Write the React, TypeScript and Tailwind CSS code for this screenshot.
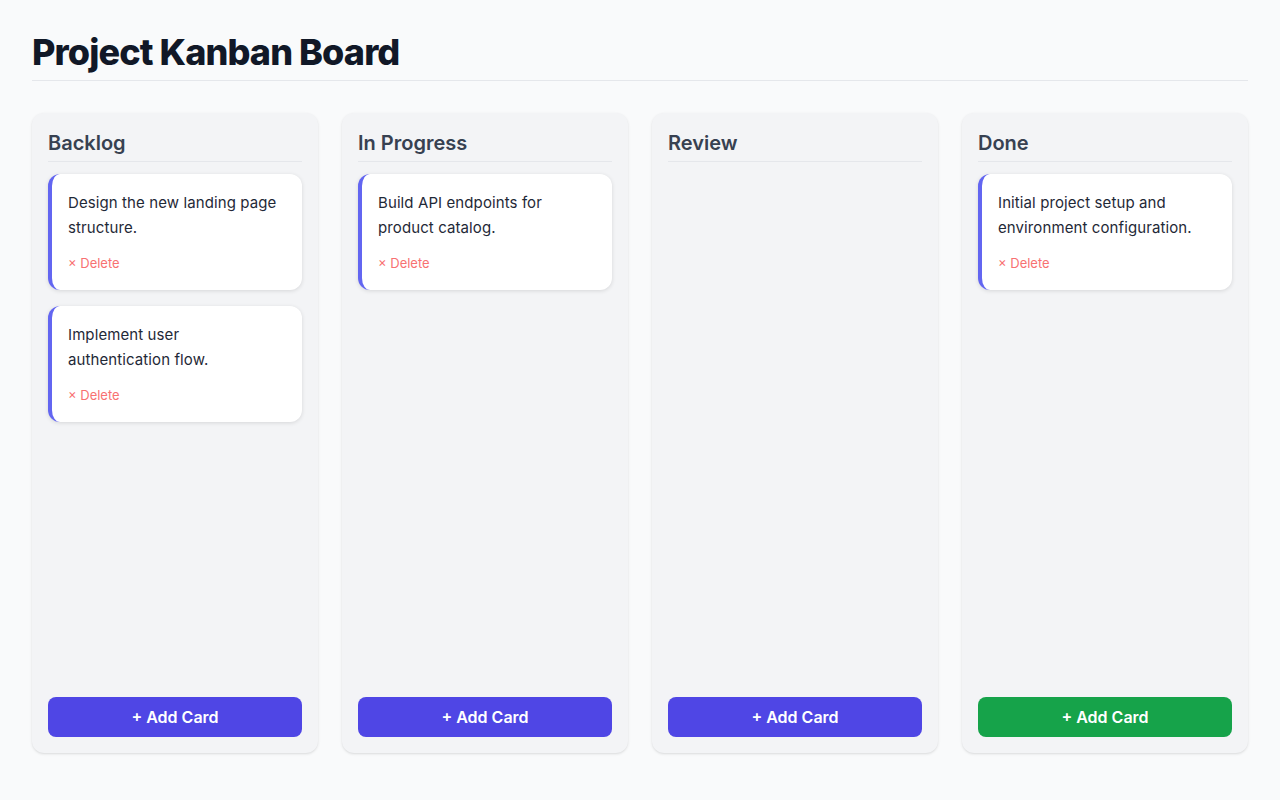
import { useState } from 'react';

interface Column {
  id: string;
  title: string;
  cards: string[];
  accent: 'indigo' | 'green';
}

const INITIAL_COLUMNS: Column[] = [
  {
    id: 'backlog',
    title: 'Backlog',
    cards: ['Design the new landing page structure.', 'Implement user authentication flow.'],
    accent: 'indigo',
  },
  { id: 'progress', title: 'In Progress', cards: ['Build API endpoints for product catalog.'], accent: 'indigo' },
  { id: 'review', title: 'Review', cards: [], accent: 'indigo' },
  { id: 'done', title: 'Done', cards: ['Initial project setup and environment configuration.'], accent: 'green' },
];

export default function App() {
  const [columns, setColumns] = useState(INITIAL_COLUMNS);

  const removeCard = (colId: string, index: number) => {
    setColumns((cols) =>
      cols.map((c) => (c.id === colId ? { ...c, cards: c.cards.filter((_, i) => i !== index) } : c))
    );
  };

  const addCard = (colId: string) => {
    setColumns((cols) => cols.map((c) => (c.id === colId ? { ...c, cards: [...c.cards, 'New task'] } : c)));
  };

  return (
    <div className="min-h-screen bg-[#f9fafb] px-8 pt-8 font-['Inter',sans-serif]">
      {/* Header */}
      <h1 className="border-b border-[#e5e7eb] pb-2 text-4xl leading-10 font-extrabold tracking-tight text-[#111827]">
        Project Kanban Board
      </h1>

      {/* Board */}
      <div className="mt-8 grid h-[640px] grid-cols-4 gap-6">
        {columns.map((col) => (
          <div key={col.id} className="flex flex-col rounded-xl bg-[#f3f4f6] p-4 shadow-sm">
            <h2 className="mb-3 border-b border-[#e5e7eb] pb-1 text-xl leading-7 font-semibold text-[#374151]">
              {col.title}
            </h2>

            <div className="flex flex-1 flex-col gap-4">
              {col.cards.map((card, i) => (
                <div
                  key={i}
                  className="rounded-xl border-l-4 border-[#6366f1] bg-white pt-4 pr-6 pb-4 pl-4 shadow-[0_1px_4px_rgba(0,0,0,0.12)]"
                >
                  <p className="text-[15px] leading-[25px] tracking-[0.1px] text-[#1f2937]">{card}</p>
                  <button
                    onClick={() => removeCard(col.id, i)}
                    className="mt-3 block text-[13px] leading-[22px] text-[#f87171]"
                  >
                    × Delete
                  </button>
                </div>
              ))}
            </div>

            <button
              onClick={() => addCard(col.id)}
              className={
                col.accent === 'green'
                  ? 'h-10 w-full rounded-lg bg-[#16a34a] text-base font-semibold text-white'
                  : 'h-10 w-full rounded-lg bg-[#4f46e5] text-base font-semibold text-white'
              }
            >
              + Add Card
            </button>
          </div>
        ))}
      </div>
    </div>
  );
}
